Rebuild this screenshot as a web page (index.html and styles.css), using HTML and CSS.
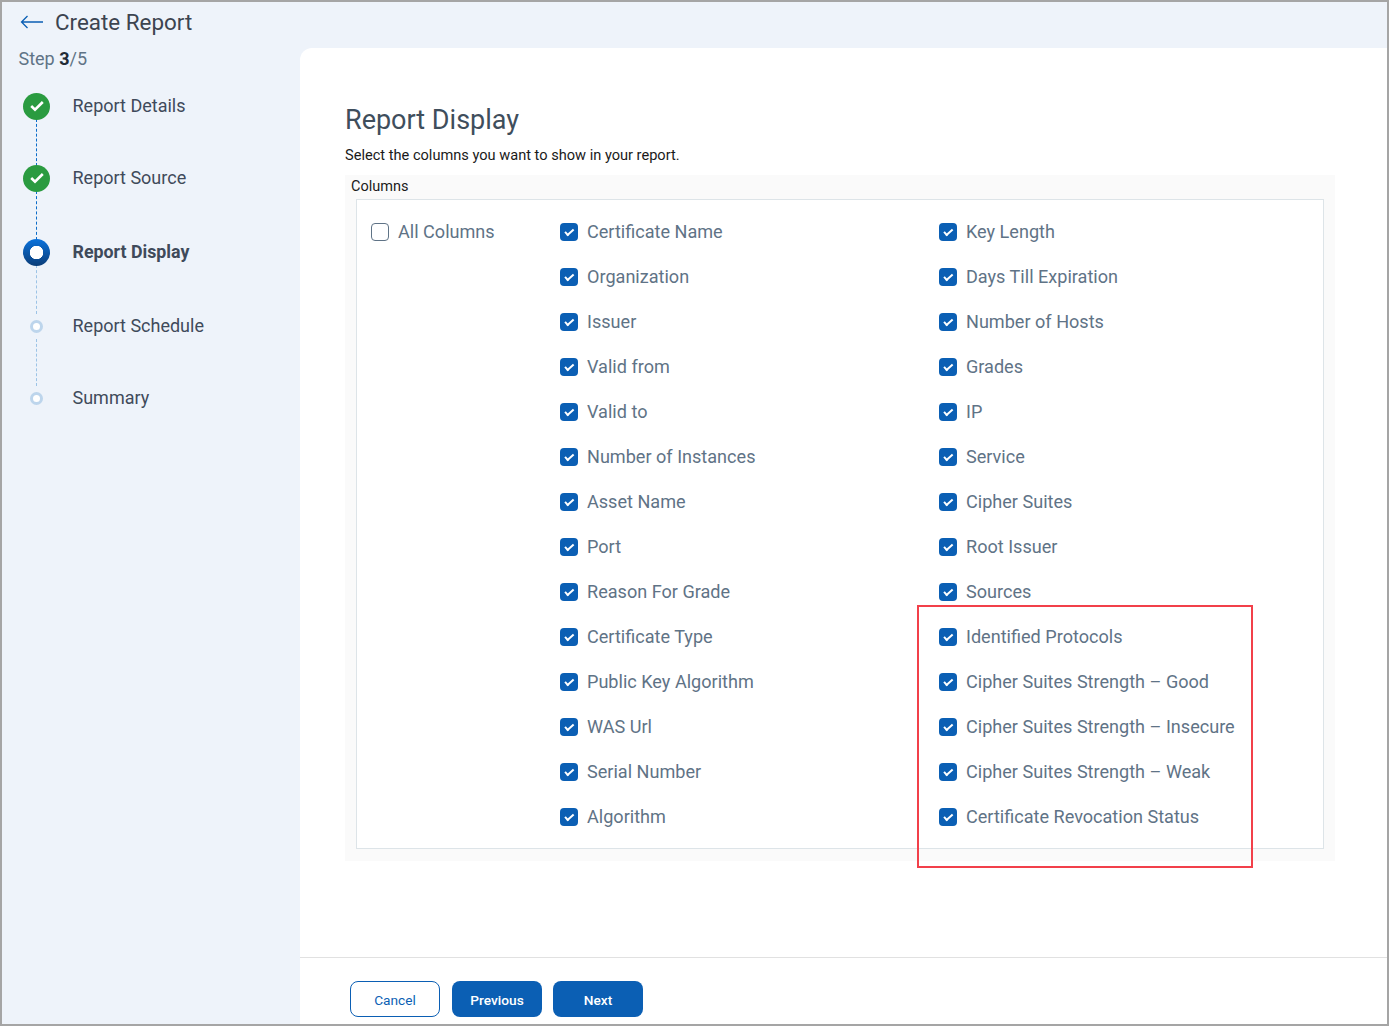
FILE: index.html
```html
<!DOCTYPE html>
<html lang="en">
<head>
<meta charset="utf-8">
<title>Create Report</title>
<link rel="stylesheet" href="styles.css">
</head>
<body>
<div class="frame">
  <div class="topbar">
    <svg class="back" width="24" height="14" viewBox="0 0 24 14"><path d="M23 7H1.5M7.5 1 1.5 7l6 6" fill="none" stroke="#0b5fb4" stroke-width="1.3"/></svg>
    <h1 class="page-title">Create Report</h1>
  </div>
  <div class="body">
    <aside class="sidebar">
      <div class="step-count">Step <b>3</b>/5</div>
      <ol class="steps">
        <li class="step done"><span class="node"><svg width="14" height="12" viewBox="0 0 14 12"><path d="M1.2 6 5 9.6 12.8 2" fill="none" stroke="#fff" stroke-width="2.6"/></svg></span><span class="step-name">Report Details</span></li>
        <li class="step done tall"><span class="node"><svg width="14" height="12" viewBox="0 0 14 12"><path d="M1.2 6 5 9.6 12.8 2" fill="none" stroke="#fff" stroke-width="2.6"/></svg></span><span class="step-name">Report Source</span></li>
        <li class="step current tall"><span class="node"></span><span class="step-name">Report Display</span></li>
        <li class="step todo"><span class="node"></span><span class="step-name">Report Schedule</span></li>
        <li class="step todo last"><span class="node"></span><span class="step-name">Summary</span></li>
      </ol>
    </aside>
    <main class="panel">
      <div class="content">
        <h2 class="title">Report Display</h2>
        <p class="subtitle">Select the columns you want to show in your report.</p>
        <section class="fieldset">
          <div class="legend">Columns</div>
          <div class="box">
            <div class="col col-all">
              <label class="opt"><span class="cb"></span>All Columns</label>
            </div>
            <div class="col col-a">
              <label class="opt"><span class="cb on"></span>Certificate Name</label>
              <label class="opt"><span class="cb on"></span>Organization</label>
              <label class="opt"><span class="cb on"></span>Issuer</label>
              <label class="opt"><span class="cb on"></span>Valid from</label>
              <label class="opt"><span class="cb on"></span>Valid to</label>
              <label class="opt"><span class="cb on"></span>Number of Instances</label>
              <label class="opt"><span class="cb on"></span>Asset Name</label>
              <label class="opt"><span class="cb on"></span>Port</label>
              <label class="opt"><span class="cb on"></span>Reason For Grade</label>
              <label class="opt"><span class="cb on"></span>Certificate Type</label>
              <label class="opt"><span class="cb on"></span>Public Key Algorithm</label>
              <label class="opt"><span class="cb on"></span>WAS Url</label>
              <label class="opt"><span class="cb on"></span>Serial Number</label>
              <label class="opt"><span class="cb on"></span>Algorithm</label>
            </div>
            <div class="col col-b">
              <label class="opt"><span class="cb on"></span>Key Length</label>
              <label class="opt"><span class="cb on"></span>Days Till Expiration</label>
              <label class="opt"><span class="cb on"></span>Number of Hosts</label>
              <label class="opt"><span class="cb on"></span>Grades</label>
              <label class="opt"><span class="cb on"></span>IP</label>
              <label class="opt"><span class="cb on"></span>Service</label>
              <label class="opt"><span class="cb on"></span>Cipher Suites</label>
              <label class="opt"><span class="cb on"></span>Root Issuer</label>
              <label class="opt"><span class="cb on"></span>Sources</label>
              <label class="opt"><span class="cb on"></span>Identified Protocols</label>
              <label class="opt"><span class="cb on"></span>Cipher Suites Strength – Good</label>
              <label class="opt"><span class="cb on"></span>Cipher Suites Strength – Insecure</label>
              <label class="opt"><span class="cb on"></span>Cipher Suites Strength – Weak</label>
              <label class="opt"><span class="cb on"></span>Certificate Revocation Status</label>
            </div>
          </div>
        </section>
      </div>
      <footer class="footer">
        <button class="btn outline">Cancel</button>
        <button class="btn solid">Previous</button>
        <button class="btn solid next">Next</button>
      </footer>
    </main>
  </div>
  <div class="highlight"></div>
</div>
</body>
</html>
```
FILE: styles.css
```css
*, *::before, *::after { box-sizing: border-box; }
html, body { margin: 0; height: 100%; }
body { font-family: Roboto, "Liberation Sans", sans-serif; color: #3d4654; }
.frame {
  position: relative;
  width: 1389px;
  height: 1026px;
  border: 2px solid #a5a5a5;
  background: #eef3fa;
  display: flex;
  flex-direction: column;
  overflow: hidden;
}
.topbar { height: 46px; display: flex; align-items: center; padding: 0 0 7px 18px; flex: none; }
.back { display: block; margin-right: 11px; }
.page-title { margin: 0; font-size: 22.4px; font-weight: 400; color: #3c4450; }
.body { flex: 1; display: flex; min-height: 0; }
.sidebar { width: 298px; flex: none; padding-left: 16.5px; }
.step-count { font-size: 18px; line-height: 22px; color: #5f7386; }
.step-count b { color: #222b36; font-weight: 700; }
.steps { list-style: none; margin: 22px 0 0; padding: 0; }
.step { position: relative; height: 72px; display: flex; align-items: flex-start; font-size: 18px; color: #3f4a5a; }
.step.tall { height: 74px; }
.step.last { height: 30px; }
.step .node { flex: none; width: 36px; height: 28px; display: flex; align-items: center; justify-content: center; margin-right: 18px; position: relative; z-index: 1; }
.step-name { line-height: 28px; }
.step.done .node::before, .step.current .node::before, .step.todo .node::before { content: ""; position: absolute; border-radius: 50%; }
.step.done .node::before { width: 27px; height: 27px; background: #2a9b40; }
.step.done .node svg { position: relative; }
.step.current .node::before { width: 27px; height: 27px; background: radial-gradient(circle, #fff 6.5px, transparent 7px), linear-gradient(#0a72dc, #0b3d78); }
.step.current .step-name { font-weight: 700; font-size: 17.8px; }
.step.todo .node::before { width: 13px; height: 13px; background: #fff; border: 3px solid #bdd5ec; }
.step::after { content: ""; position: absolute; left: 17.5px; top: 27px; bottom: -2px; border-left: 1px dashed #0b6cc9; }
.step.current::after, .step.todo::after { border-left-color: #9cc3e6; }
.step.last::after { display: none; }
.panel { flex: 1; background: #fff; border-top-left-radius: 12px; display: flex; flex-direction: column; min-width: 0; }
.content { flex: 1; padding: 54px 52px 0 45px; }
.title { margin: 0; font-size: 27px; line-height: 36px; font-weight: 400; color: #3f4e5c; }
.subtitle { margin: 7px 0 0; font-size: 14.6px; line-height: 20px; color: #1a1a1a; }
.fieldset { margin-top: 10px; background: #fafafa; padding: 0 11px 12px; height: 686px; }
.legend { font-size: 14.5px; line-height: 22px; margin-left: -5px; padding: 1px 0 1px; color: #1a1a1a; }
.box { height: 650px; background: #fff; border: 1px solid #dde4e8; display: grid; grid-template-columns: 189px 379px 1fr; padding: 9px 0 0 14px; }
.col { display: flex; flex-direction: column; }
.opt { height: 45px; display: flex; align-items: center; font-size: 18.08px; color: #5f7386; }
.cb { width: 18px; height: 18px; border-radius: 4px; margin-right: 9px; flex: none; border: 1.5px solid #5f7386; background: #fff; position: relative; }
.cb.on { border: 0; background: #0b5fb4; }
.cb.on::after { content: ""; position: absolute; left: 6.5px; top: 4px; width: 5px; height: 8.5px; border: solid #fff; border-width: 0 2.2px 2.2px 0; transform: rotate(48deg); }
.footer { height: 67px; flex: none; border-top: 1px solid #e1e1e1; padding: 23px 0 0 50px; display: flex; gap: 12px; }
.btn { width: 90px; height: 36px; border-radius: 8px; font: 500 13.7px Roboto, "Liberation Sans", sans-serif; padding: 2px 0 0; }
.btn.outline { background: #fff; border: 1px solid #0b5fb4; color: #0b5fb4; font-weight: 400; }
.btn.solid { background: #0b5fb4; border: 0; color: #fff; }
.btn.next { margin-left: -1px; }
.highlight { position: absolute; left: 915px; top: 603px; width: 336px; height: 263px; border: 2px solid #f2404a; }
```
